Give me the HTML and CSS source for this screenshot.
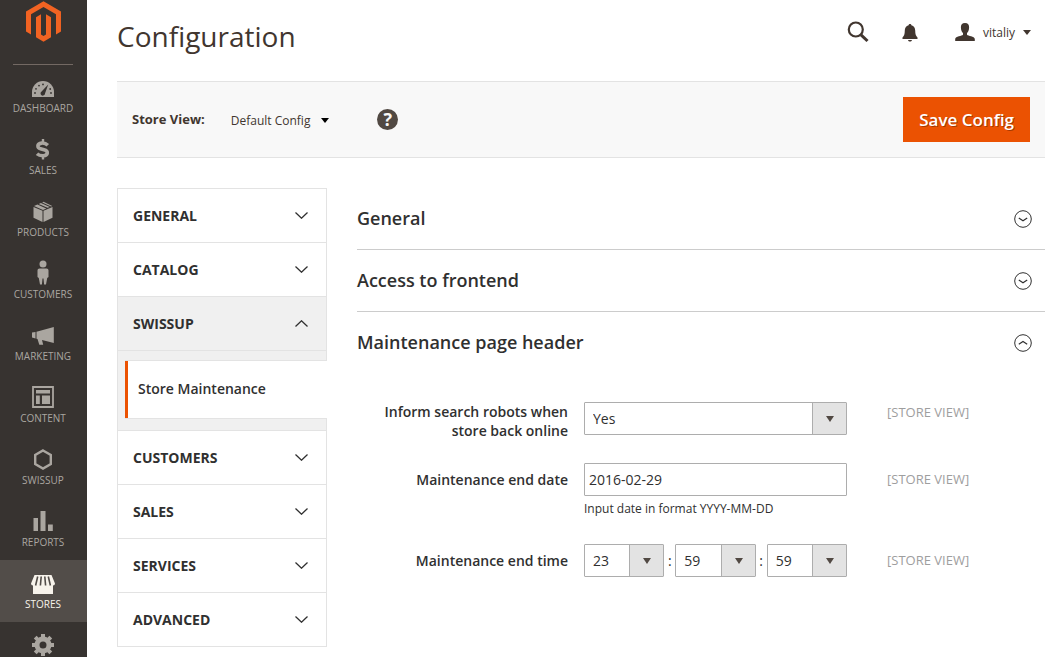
FILE: index.html
```html
<!DOCTYPE html>
<html lang="en">
<head>
<meta charset="utf-8">
<title>Configuration</title>
<link rel="stylesheet" href="styles.css">
</head>
<body>
<svg class="sprite" aria-hidden="true">
  <symbol id="down" viewBox="0 0 13 7"><path d="M.5.500l6 5.700 6-5.700" fill="none" stroke="currentColor" stroke-width="1.300"/></symbol>
  <symbol id="up" viewBox="0 0 13 7"><path d="M.5 6.500l6-5.700 6 5.700" fill="none" stroke="currentColor" stroke-width="1.300"/></symbol>
  <symbol id="circle-down" viewBox="0 0 18 18"><circle cx="9" cy="9" r="8.300" fill="none" stroke="currentColor" stroke-width="1"/><path d="M4.800 8L9 10.800 13.200 8" fill="none" stroke="currentColor" stroke-width="1.200"/></symbol>
  <symbol id="circle-up" viewBox="0 0 18 18"><circle cx="9" cy="9" r="8.300" fill="none" stroke="currentColor" stroke-width="1"/><path d="M4.800 10.200L9 7.400l4.200 2.800" fill="none" stroke="currentColor" stroke-width="1.200"/></symbol>
</svg>
<div class="page">
  <aside class="sidebar">
    <a class="logo" href="#" aria-label="Magento Admin"><svg width="35" height="41" viewBox="1.6 0 20.8 24"><path fill="#f26322" d="M12 24l-4.455-2.572v-12l2.97-1.715v12.001l1.485.902 1.485-.902V7.713l2.971 1.715v12L12 24zM22.391 6v12l-2.969 1.714V7.713L12 3.43 4.574 7.713v12.001L1.609 18V6L12 0l10.391 6z"/></svg></a>
    <nav class="menu">
      <a class="menu-item" href="#"><svg width="24" height="26" viewBox="0 0 24 26"><path fill="currentColor" d="M1 23v-5a11 11 0 0 1 22 0v5z"/><g fill="#373330"><circle cx="4" cy="19" r=".9"/><circle cx="5" cy="14.800" r=".9"/><circle cx="8" cy="11.600" r=".9"/><circle cx="12" cy="10.400" r=".9"/><circle cx="19.200" cy="15" r=".9"/><circle cx="20" cy="19" r=".9"/><path d="M17.200 10.500l-3.100 8.800a2.300 2.300 0 1 1-3.500-1.900z"/></g></svg>Dashboard</a>
      <a class="menu-item" href="#"><svg width="24" height="26" viewBox="0 0 24 26"><path fill="none" stroke="currentColor" stroke-width="3.600" d="M16.800 9.300C15.300 7.800 12.800 6.900 10.700 7.100 5.400 7.700 6.300 12 9.500 12.800l3.500.9c4.700 1.200 4.200 5.600-.6 6-2.400.1-4.900-.6-6.400-2"/><path stroke="currentColor" stroke-width="2.400" d="M12 3V8M12 18.500V23.500"/></svg>Sales</a>
      <a class="menu-item" href="#"><svg width="24" height="26" viewBox="0 0 24 26"><g fill="currentColor"><path d="M2.500 9l9 3.800V24l-9-4.300zM21.500 9l-9 3.800V24l9-4.300z"/><path d="M3 8L6.400 6.500l8.900 3.900L12 11.900zM7.700 5.900L9.900 5l8.900 3.900-2.200.9zM11.200 4.400L12.500 3.800 21.200 8l-1.100.4z"/></g></svg>Products</a>
      <a class="menu-item" href="#"><svg width="24" height="26" viewBox="0 0 24 26"><g fill="currentColor"><circle cx="12" cy="4" r="3.500"/><path d="M8.500 8.500h7c1.200 0 2 .8 2 2V17l-1.300 1L15 24.500h-1.900l-.6-6h-1l-.6 6H9L7.800 18l-1.300-1v-6.500c0-1.200.8-2 2-2z"/></g></svg>Customers</a>
      <a class="menu-item" href="#"><svg width="24" height="26" viewBox="0 0 24 26"><g fill="currentColor"><path d="M1 10.500L4.500 10v6.500L1 15.500zM5.500 9.800L22.800 5v16L11 18l1.200 4.700H8.300L6.500 17l-1-.3z"/></g></svg>Marketing</a>
      <a class="menu-item" href="#"><svg width="24" height="26" viewBox="0 0 24 26"><path fill="none" stroke="currentColor" stroke-width="1.800" d="M2 3h20v20H2z"/><path fill="currentColor" d="M5 6h14v3.500H5zM5 11.500h3.800V20H5zM11 11.500h8V20h-8z"/></svg>Content</a>
      <a class="menu-item" href="#"><svg width="24" height="26" viewBox="0 0 24 26"><path fill="none" stroke="currentColor" stroke-width="2.400" d="M12 4.500l7.800 4.500v9L12 22.500 4.200 18V9z"/></svg>Swissup</a>
      <a class="menu-item" href="#"><svg width="24" height="26" viewBox="0 0 24 26"><path fill="currentColor" d="M2.500 10H7v13H2.500zM9.500 3h5v20h-5zM17 16.500h4.800V23H17z"/></svg>Reports</a>
      <a class="menu-item is-active" href="#"><svg width="24" height="26" viewBox="0 0 24 26"><path fill="currentColor" d="M3.500 5h17L24 13.500a2 2 0 0 1-2 2V24H2v-8.500a2 2 0 0 1-2-2z"/><path stroke="#524d49" stroke-width="1.600" d="M6.700 6.500L4.600 15.500M10.200 6.500l-.8 9M13.800 6.500l.8 9M17.300 6.500l2.100 9"/></svg>Stores</a>
      <a class="menu-item" href="#" aria-label="System"><svg width="24" height="26" viewBox="0 0 24 26"><g fill="none" stroke="currentColor" transform="translate(12 13)"><circle r="6" stroke-width="5"/><path stroke-width="4" d="M0-7.500V-11M0 7.500V11M-7.500 0H-11M7.500 0H11M5.300-5.300l2.500-2.500M5.300 5.300l2.500 2.500M-5.300 5.300l-2.500 2.500M-5.300-5.300l-2.500-2.500"/></g></svg></a>
    </nav>
  </aside>
  <main class="main">
    <header class="header">
      <h1 class="title">Configuration</h1>
      <div class="tools">
        <button class="tool" type="button" aria-label="Search"><svg width="22" height="22" viewBox="0 0 22 22"><g fill="none" stroke="currentColor"><circle cx="8.800" cy="8.500" r="7" stroke-width="2.200"/><path stroke-width="3" d="M14 13.800l6.500 6.200"/></g></svg></button>
        <button class="tool" type="button" aria-label="Notifications"><svg width="16" height="20" viewBox="0 -2 16 20"><path fill="currentColor" d="M8 0c.9 0 1.400.6 1.400 1.300C12 2 13.200 4 13.200 6.500c0 4 .8 5.500 2.300 7V15H.5v-1.500c1.500-1.500 2.300-3 2.300-7C2.800 4 4 2 6.600 1.300 6.600.6 7.100 0 8 0zM6 16h4c-.3 1-1 1.600-2 1.600S6.300 17 6 16z"/></svg></button>
        <button class="tool user" type="button"><svg width="20" height="18" viewBox="0 0 20 18"><path fill="currentColor" d="M10 0c3 0 4.300 2 4.100 4.500-.1 2.800-1 4.600-2.100 5.600v1.700c1 1.400 7.500 1.500 7.800 4.200v2H.2v-2c.3-2.700 6.800-2.800 7.800-4.200v-1.700C6.900 9.100 6 7.300 5.900 4.500 5.700 2 7 0 10 0z"/></svg><span>vitaliy</span><i class="caret"></i></button>
      </div>
    </header>
    <div class="toolbar">
      <span class="toolbar-label" id="view-label">Store View:</span>
      <button class="switcher" type="button" aria-describedby="view-label">Default Config<i class="caret caret-black"></i></button>
      <a class="help" href="#" aria-label="Help">?</a>
      <button class="save" type="button">Save Config</button>
    </div>
    <div class="columns">
      <nav class="tabs">
        <button class="tab" type="button">General<svg class="chevron"><use href="#down"/></svg></button>
        <button class="tab" type="button">Catalog<svg class="chevron"><use href="#down"/></svg></button>
        <button class="tab is-open" type="button">Swissup<svg class="chevron"><use href="#up"/></svg></button>
        <div class="subtabs"><a class="subtab" href="#">Store Maintenance</a></div>
        <button class="tab" type="button">Customers<svg class="chevron"><use href="#down"/></svg></button>
        <button class="tab" type="button">Sales<svg class="chevron"><use href="#down"/></svg></button>
        <button class="tab" type="button">Services<svg class="chevron"><use href="#down"/></svg></button>
        <button class="tab" type="button">Advanced<svg class="chevron"><use href="#down"/></svg></button>
      </nav>
      <div class="sections">
        <button class="section-head" type="button">General<svg class="ring"><use href="#circle-down"/></svg></button>
        <button class="section-head" type="button">Access to frontend<svg class="ring"><use href="#circle-down"/></svg></button>
        <button class="section-head is-open" type="button">Maintenance page header<svg class="ring"><use href="#circle-up"/></svg></button>
        <form class="fields">
          <div class="field">
            <label class="label label-tall" for="inform">Inform search robots when store back online</label>
            <span class="select"><select id="inform"><option>Yes</option><option>No</option></select></span>
            <span class="scope scope-tall">[STORE VIEW]</span>
          </div>
          <div class="field">
            <label class="label" for="date">Maintenance end date</label>
            <div><input class="text" id="date" type="text" value="2016-02-29"><p class="note">Input date in format YYYY-MM-DD</p></div>
            <span class="scope">[STORE VIEW]</span>
          </div>
          <div class="field">
            <label class="label" for="hour">Maintenance end time</label>
            <div class="time">
              <span class="select"><select id="hour"><option>23</option></select></span><span class="colon">:</span>
              <span class="select"><select aria-label="Minutes"><option>59</option></select></span><span class="colon">:</span>
              <span class="select"><select aria-label="Seconds"><option>59</option></select></span>
            </div>
            <span class="scope">[STORE VIEW]</span>
          </div>
        </form>
      </div>
    </div>
  </main>
</div>
</body>
</html>
```
FILE: styles.css
```css
* { box-sizing: border-box; }
body {
  margin: 0;
  background: #fff;
  color: #303030;
  font: 14px/19px "Open Sans", "Noto Sans", sans-serif;
}
button, input, select { font: inherit; color: inherit; margin: 0; }
button { border: 0; padding: 0; background: none; cursor: pointer; }
a { color: inherit; text-decoration: none; }
svg { display: block; flex: none; }
.sprite { display: none; }

.page { display: flex; min-height: 100vh; }

/* Sidebar */
.sidebar {
  position: sticky;
  top: 0;
  flex: none;
  width: 87px;
  height: 100vh;
  overflow: hidden;
  background: #373330;
}
.logo {
  display: flex;
  justify-content: center;
  height: 65px;
  margin: 0 14px 0 13px;
  padding-top: 1px;
  border-bottom: 1px solid #736963;
}
.menu { margin-top: -1px; }
.menu-item {
  display: flex;
  flex-direction: column;
  align-items: center;
  gap: 1px;
  height: 62px;
  padding: 10px 1px 0 0;
  color: #aaa6a0;
  font-size: 10px;
  line-height: 14px;
  text-transform: uppercase;
}
.menu-item.is-active { background: #524d49; color: #f7f3eb; }

/* Header */
.main { flex: 1; min-width: 0; padding: 0 5px 10px 30px; }
.header {
  display: flex;
  justify-content: space-between;
  align-items: flex-start;
  height: 81px;
  padding: 17px 14px 0 0;
  color: #41362f;
}
.title { margin: 0; font-size: 28px; line-height: 38px; font-weight: 400; }
.tools { display: flex; align-items: center; gap: 33px; height: 30px; }
.tool { display: flex; align-items: center; }
.user { gap: 8px; padding-left: 4px; font-size: 12px; }
.caret {
  border: solid transparent;
  border-width: 5px 4px 0;
  border-top-color: currentColor;
}
.caret-black { border-top-color: #000; }

/* Toolbar */
.toolbar {
  display: flex;
  align-items: center;
  padding: 15px;
  background: #f8f8f8;
  border: solid #e3e3e3;
  border-width: 1px 0;
  color: #41362f;
}
.toolbar-label { font-size: 13px; font-weight: 700; }
.switcher { display: flex; align-items: center; gap: 11px; margin-left: 26px; padding-top: 1px; font-size: 12px; }
.help {
  width: 21px;
  height: 21px;
  margin-left: 48px;
  border-radius: 50%;
  background: #514943;
  color: #f8f8f8;
  font-size: 18px;
  line-height: 21px;
  font-weight: 700;
  text-align: center;
}
.save {
  height: 45px;
  margin-left: auto;
  padding: 0 16px;
  background: #eb5202;
  color: #fff;
  font-size: 17px;
  font-weight: 600;
  text-shadow: 1px 1px 0 rgba(0, 0, 0, .3);
}

/* Tabs */
.columns { display: flex; align-items: flex-start; gap: 30px; padding-top: 30px; }
.tabs { flex: none; width: 210px; border: solid #e3e3e3; border-width: 1px 1px 0; }
.tab {
  display: flex;
  justify-content: space-between;
  align-items: center;
  width: 100%;
  height: 54px;
  padding: 0 18px 0 15px;
  border-bottom: 1px solid #e3e3e3;
  font-weight: 700;
  text-transform: uppercase;
}
.tab.is-open { background: #f0f0f0; }
.chevron { width: 13px; height: 7px; }
.subtabs {
  margin-right: -1px;
  padding: 9px 0 11px 7px;
  background: linear-gradient(#e3e3e3, #e3e3e3) right / 1px 100% no-repeat #f0f0f0;
  border-bottom: 1px solid #e3e3e3;
}
.subtab {
  display: block;
  padding: 18px 13px 20px;
  background: #fff;
  border: solid #e3e3e3;
  border-width: 1px 0;
  box-shadow: inset 3px 0 #eb5202;
  font-weight: 600;
}

/* Sections */
.sections { flex: 1; min-width: 0; }
.section-head {
  display: flex;
  justify-content: space-between;
  align-items: center;
  width: 100%;
  height: 62px;
  padding-right: 13px;
  border-bottom: 1px solid #ccc;
  font-size: 18px;
  font-weight: 600;
}
.section-head.is-open { border-bottom-color: transparent; }
.ring { width: 18px; height: 18px; }
.fields { display: grid; gap: 23px; padding-top: 28px; }
.field { display: grid; grid-template-columns: 211fr 263fr 182fr; column-gap: 16px; align-items: start; }
.label { padding-top: 7px; font-weight: 600; text-align: right; }
.label-tall { padding-top: 0; }
.scope { padding: 7px 0 0 24px; color: #9e9e9e; font-size: 13px; }
.scope-tall { padding-top: 1px; }
.select { position: relative; display: block; flex: 1; }
.select select, .text {
  display: block;
  width: 100%;
  height: 33px;
  border: 1px solid #adadad;
  border-radius: 1px;
  background: #fff;
}
.select select {
  padding: 0 36px 1px 8px;
  appearance: none;
  background: linear-gradient(90deg, #adadad 1px, #e3e3e3 1px) right / 34px 100% no-repeat #fff;
}
.select::after {
  content: "";
  position: absolute;
  right: 13px;
  top: 14px;
  border: solid transparent;
  border-width: 6px 4px 0;
  border-top-color: #514943;
  pointer-events: none;
}
.text { padding: 0 4px 1px; }
.note { margin: 4px 0 0; padding-bottom: 3px; font-size: 12px; line-height: 18px; }
.time { display: flex; align-items: center; }
.colon { width: 11px; text-align: center; }
```
